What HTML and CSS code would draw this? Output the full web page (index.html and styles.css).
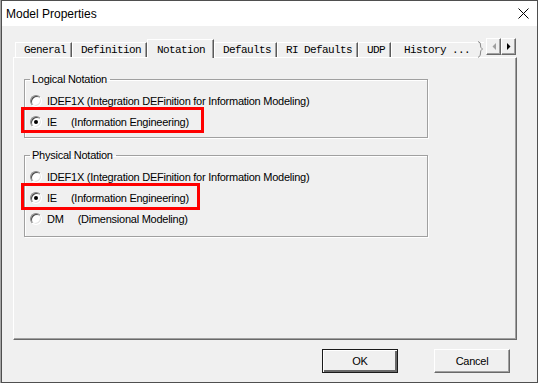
FILE: index.html
```html
<!DOCTYPE html>
<html lang="en">
<head>
    <meta charset="UTF-8">
    <meta name="viewport" content="width=device-width, initial-scale=1.0">
    <title>Model Properties</title>
    <link rel="stylesheet" href="styles.css">
</head>
<body>
    <div class="window">
        <div class="titlebar">
            <span class="title">Model Properties</span>
            <svg class="close" width="11" height="11" viewBox="0 0 11 11">
                <path d="M0.5 0.5 L10.5 10.5 M10.5 0.5 L0.5 10.5" />
            </svg>
        </div>

        <div class="dialog">
            <div class="tabstrip">
                <div class="tab">General</div>
                <div class="tab">Definition</div>
                <div class="tab tab-active">Notation</div>
                <div class="tab">Defaults</div>
                <div class="tab">RI Defaults</div>
                <div class="tab">UDP</div>
                <div class="tab tab-cut"><span>History ...</span><svg class="torn" width="7" height="17" viewBox="0 0 7 17"><path d="M1 0.5 Q4 1.5 3.5 4 Q3 6.5 5.5 8 Q3 9.5 3.5 12 Q4 15 1 16.5" /></svg></div>
                <div class="spin">
                    <span class="spin-btn">
                        <svg width="4" height="7" viewBox="0 0 4 7"><path class="arrow-off" d="M4 0 L0.5 3.5 L4 7 Z" /></svg>
                    </span>
                    <span class="spin-btn">
                        <svg width="4" height="7" viewBox="0 0 4 7"><path d="M0 0 L3.5 3.5 L0 7 Z" /></svg>
                    </span>
                </div>
            </div>

            <div class="panel">
                <fieldset class="group">
                    <legend>Logical Notation</legend>
                    <div class="option">
                        <span class="radio"></span>
                        <span class="label">IDEF1X (Integration DEFinition for Information Modeling)</span>
                    </div>
                    <div class="option marked">
                        <span class="radio checked"></span>
                        <span class="label">IE     (Information Engineering)</span>
                    </div>
                </fieldset>

                <fieldset class="group group-physical">
                    <legend>Physical Notation</legend>
                    <div class="option">
                        <span class="radio"></span>
                        <span class="label">IDEF1X (Integration DEFinition for Information Modeling)</span>
                    </div>
                    <div class="option marked marked-short">
                        <span class="radio checked"></span>
                        <span class="label">IE     (Information Engineering)</span>
                    </div>
                    <div class="option">
                        <span class="radio"></span>
                        <span class="label">DM     (Dimensional Modeling)</span>
                    </div>
                </fieldset>
            </div>

            <div class="buttons">
                <button class="btn btn-default">OK</button>
                <button class="btn">Cancel</button>
            </div>
        </div>
    </div>
</body>
</html>
```

FILE: styles.css
```css
body {
    margin: 0;
    background-color: #ffffff;
    font-family: "Liberation Sans", Arial, sans-serif;
    color: #000;
}

.window {
    width: 537px;
    height: 383px;
    margin-left: 1px;
    border: 1px solid #4f4f4f;
    box-sizing: border-box;
    box-shadow: 0 4px 0 #8a8a8a, -1px 0 0 #a6a6a6;
    display: flex;
    flex-direction: column;
}

.titlebar {
    height: 25px;
    background-color: #fff;
    display: flex;
    align-items: center;
    padding: 0 8px 0 4px;
    flex-shrink: 0;
}

.title {
    font-size: 12px;
    line-height: 24px;
}

.close {
    margin-left: auto;
    stroke: #000;
    stroke-width: 1;
    fill: none;
}

.dialog {
    flex: 1;
    background-color: #f0f0f0;
    padding: 13px 0 0 11px;
}

/* tab strip */
.tabstrip {
    display: flex;
    align-items: flex-end;
    width: 504px;
    height: 18px;
    padding-left: 2px;
    box-sizing: border-box;
}

.tab {
    height: 15px;
    box-sizing: border-box;
    padding: 0 5px 0 8px;
    border-left: 1px solid #fff;
    border-top: 1px solid #fff;
    border-right: 1px solid #5a5a5a;
    box-shadow: inset -1px 0 0 #a0a0a0;
    font-family: "Liberation Mono", "Courier New", monospace;
    font-size: 11px;
    letter-spacing: -0.6px;
    line-height: 14px;
    white-space: nowrap;
    background-color: #f0f0f0;
}

.tab-active {
    height: 19px;
    padding: 3px 8px 0 9px;
    margin-bottom: -1px;
    position: relative;
    z-index: 1;
}

.tab-cut {
    display: flex;
    padding-left: 12px;
    padding-right: 0;
    border-right: none;
    box-shadow: none;
}

.torn {
    margin: -2px 0 0 7px;
    stroke: #8a8a8a;
    fill: none;
}

.spin {
    margin-left: auto;
    margin-right: 1px;
    align-self: flex-start;
    margin-top: -1px;
    display: flex;
}

.spin-btn {
    width: 15px;
    height: 17px;
    box-sizing: border-box;
    display: flex;
    align-items: center;
    justify-content: center;
    border: 1px solid;
    border-color: #fff #696969 #696969 #fff;
    box-shadow: inset -1px -1px 0 #a0a0a0;
}

.spin-btn path {
    fill: #000;
}

.spin-btn path.arrow-off {
    fill: #a0a0a0;
}

/* page body */
.panel {
    width: 504px;
    height: 283px;
    box-sizing: border-box;
    border: 1px solid;
    border-color: #fff #696969 #696969 #fff;
    box-shadow: inset -1px -1px 0 #a0a0a0;
    padding: 14px 0 0 10px;
}

.group {
    width: 404px;
    box-sizing: border-box;
    margin: 0 0 10px;
    padding: 4px 5px 5px;
    border: 1px solid #a0a0a0;
    box-shadow: inset 1px 1px 0 #fff, 1px 1px 0 #fff;
    font-size: 11px;
    letter-spacing: -0.25px;
}

.group-physical {
    padding-bottom: 7px;
}

.group legend {
    padding: 0 3px 0 2px;
    line-height: 14px;
}

.option {
    display: flex;
    align-items: center;
    height: 21px;
    position: relative;
}

.label {
    margin-left: 5px;
    white-space: pre;
}

.radio {
    width: 12px;
    height: 12px;
    box-sizing: border-box;
    border-radius: 50%;
    border: 1px solid;
    border-color: #8a8a8a #fff #fff #8a8a8a;
    box-shadow: inset 1px 1px 0 #4a4a4a, inset -1px -1px 0 #e3e3e3;
    background-color: #fff;
    position: relative;
}

.radio.checked::after {
    content: "";
    position: absolute;
    left: 3px;
    top: 3px;
    width: 4px;
    height: 4px;
    border-radius: 50%;
    background-color: #000;
}

/* red highlight drawn over the screenshot */
.marked::after {
    content: "";
    position: absolute;
    left: -9px;
    top: -4px;
    width: 183px;
    height: 26px;
    box-sizing: border-box;
    border: 3px solid #f00;
}

.marked-short::after {
    width: 179px;
    height: 27px;
}

/* dialog buttons */
.buttons {
    display: flex;
    justify-content: flex-end;
    gap: 36px;
    margin-top: 9px;
    padding-right: 27px;
}

.btn {
    width: 76px;
    height: 24px;
    box-sizing: border-box;
    padding: 0;
    font-family: "Liberation Sans", Arial, sans-serif;
    font-size: 11px;
    letter-spacing: -0.25px;
    color: #000;
    background-color: #f0f0f0;
    border: 1px solid;
    border-color: #fff #696969 #696969 #fff;
    box-shadow: inset -1px -1px 0 #a0a0a0;
}

.btn-default {
    border: 1px solid #1a1a1a;
    box-shadow: inset 1px 1px 0 #fff, inset -2px -2px 0 #696969;
}
```
